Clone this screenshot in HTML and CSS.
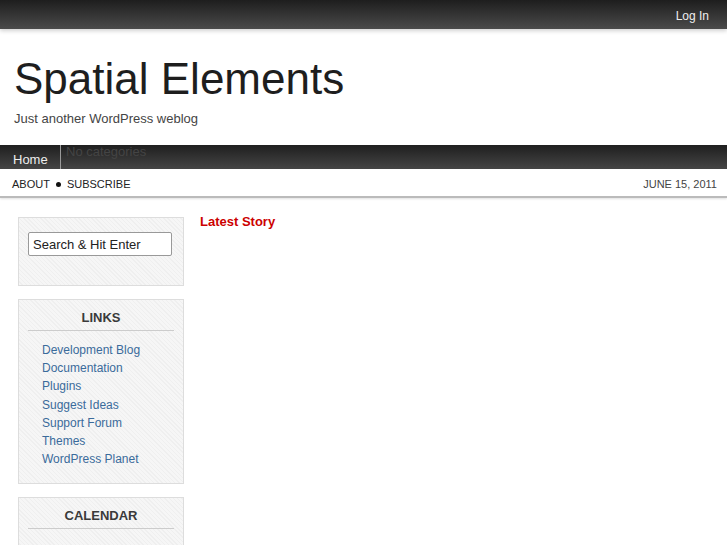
FILE: index.html
```html
<!DOCTYPE html>
<html lang="en">
<head>
    <meta charset="UTF-8">
    <title>Spatial Elements</title>
    <link rel="stylesheet" href="styles.css">
</head>
<body>

    <div class="topbar">
        <a href="#" class="login">Log In</a>
    </div>

    <div class="header">
        <h1 class="site-title">Spatial Elements</h1>
        <p class="tagline">Just another WordPress weblog</p>
    </div>

    <div class="navbar">
        <a href="#" class="nav-home">Home</a>
        <span class="nav-empty">No categories</span>
    </div>

    <div class="subbar">
        <div class="sublinks">
            <a href="#">About</a>
            <span class="dot"></span>
            <a href="#">Subscribe</a>
        </div>
        <div class="date">June 15, 2011</div>
    </div>

    <div class="content">
        <div class="sidebar">
            <div class="widget widget-search">
                <input type="text" class="search" value="Search &amp; Hit Enter">
            </div>

            <div class="widget">
                <h3 class="widget-title">Links</h3>
                <ul class="links">
                    <li><a href="#">Development Blog</a></li>
                    <li><a href="#">Documentation</a></li>
                    <li><a href="#">Plugins</a></li>
                    <li><a href="#">Suggest Ideas</a></li>
                    <li><a href="#">Support Forum</a></li>
                    <li><a href="#">Themes</a></li>
                    <li><a href="#">WordPress Planet</a></li>
                </ul>
            </div>

            <div class="widget widget-calendar">
                <h3 class="widget-title">Calendar</h3>
            </div>
        </div>

        <div class="main">
            <h2 class="latest">Latest Story</h2>
        </div>
    </div>

</body>
</html>
```

FILE: styles.css
```css
body {
    margin: 0;
    font-family: "Liberation Sans", Arial, sans-serif;
    background: #fff;
    color: #222;
    overflow: hidden;
}

a {
    text-decoration: none;
}

.topbar {
    height: 29px;
    background: linear-gradient(#1e1e1e, #4a4a4a);
    display: flex;
    justify-content: flex-end;
    align-items: center;
    box-shadow: 0 2px 4px rgba(0, 0, 0, 0.18);
}

.login {
    color: #eee;
    font-size: 12px;
    margin-right: 18px;
    margin-top: 3px;
}

.header {
    padding: 14px 14px 0;
    height: 102px;
}

.site-title {
    margin: 11px 0 0;
    font-size: 44px;
    font-weight: normal;
    line-height: 50px;
    color: #1e1e1e;
}

.tagline {
    margin: 7px 0 0;
    font-size: 13px;
    color: #444;
}

.navbar {
    height: 24px;
    background: linear-gradient(#1f1f1f, #454545);
    display: flex;
    align-items: stretch;
}

.nav-home {
    color: #eee;
    font-size: 13px;
    padding: 7px 13px 0;
    width: 34px;
    border-right: 1px solid #9a9a9a;
}

.nav-empty {
    color: #444;
    font-size: 13px;
    padding-left: 5px;
    margin-top: -1px;
}

.subbar {
    height: 24px;
    display: flex;
    justify-content: space-between;
    align-items: center;
    padding: 3px 10px 0 12px;
    border-bottom: 2px solid #bbb;
    box-shadow: 0 1px 2px rgba(0, 0, 0, 0.12);
    font-size: 11px;
    text-transform: uppercase;
}

.sublinks {
    display: flex;
    align-items: center;
    gap: 6px;
}

.sublinks a {
    color: #222;
}

.dot {
    width: 5px;
    height: 5px;
    border-radius: 50%;
    background: #111;
}

.date {
    color: #444;
}

.content {
    display: flex;
    padding: 19px 18px 0;
    gap: 16px;
}

.sidebar {
    width: 166px;
    display: flex;
    flex-direction: column;
    gap: 13px;
}

.widget {
    border: 1px solid #ddd;
    background: repeating-linear-gradient(45deg, #f6f6f6 0 2px, #efefef 2px 3px);
    padding: 0 9px 15px;
}

.widget-search {
    padding: 14px 9px 29px;
}

.widget-calendar {
    min-height: 140px;
}

.search {
    width: 144px;
    height: 24px;
    box-sizing: border-box;
    border: 1px solid #999;
    border-radius: 2px;
    padding: 2px 4px;
    font-family: "Liberation Sans", Arial, sans-serif;
    font-size: 13px;
    color: #222;
    background: #fff;
}

.widget-title {
    margin: 0;
    padding: 10px 0 5px;
    text-align: center;
    font-size: 13px;
    color: #3a3a3a;
    text-transform: uppercase;
    border-bottom: 1px solid #ccc;
}

.links {
    list-style: none;
    margin: 10px 0 0;
    padding: 0 0 0 14px;
}

.links li {
    font-size: 12px;
    line-height: 18.2px;
}

.links a {
    color: #3a6b9b;
}

.main {
    flex: 1;
}

.latest {
    margin: -3px 0 0;
    font-size: 13px;
    color: #cc0000;
}
```
